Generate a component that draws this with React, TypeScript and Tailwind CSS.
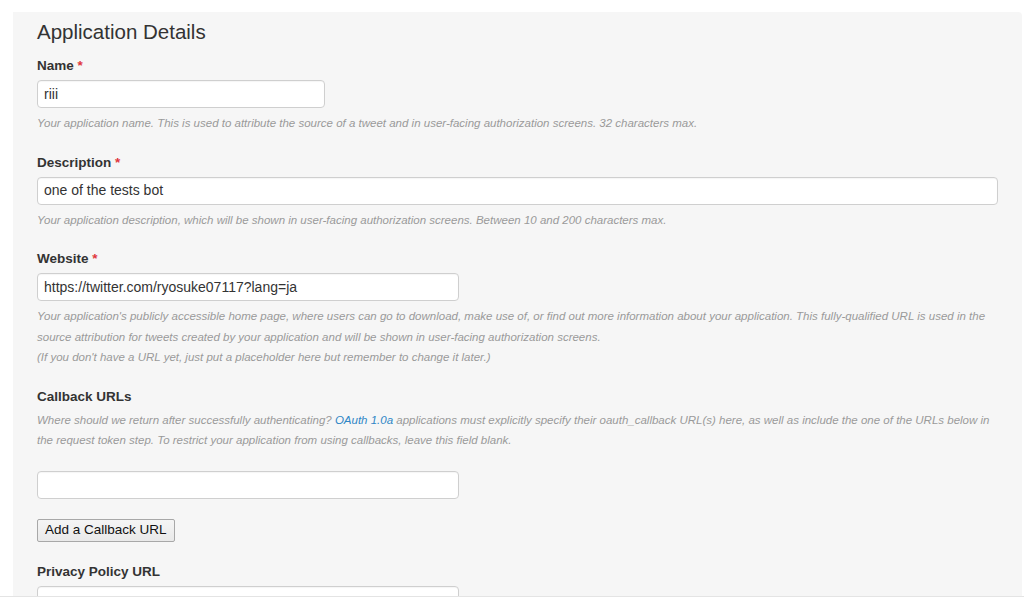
import React from "react";

const font = { fontFamily: '"Liberation Sans", Arial, Helvetica, sans-serif' };

function Label({ children, required }: { children: React.ReactNode; required?: boolean }) {
  return (
    <div className="text-[13.5px] leading-[20px] font-bold text-[#333] mb-[4px]">
      {children}
      {required && <span className="text-[#e0383e] font-bold"> *</span>}
    </div>
  );
}

function Field({ value, width }: { value?: string; width: string }) {
  return (
    <div
      className={`${width} h-[28px] bg-white border border-[#cfcfcf] rounded-[4px] px-[6px] flex items-center text-[14px] text-[#333] shadow-[inset_0_1px_1px_rgba(0,0,0,0.04)]`}
    >
      {value}
    </div>
  );
}

function Help({ children }: { children: React.ReactNode }) {
  return <div className="mt-[5px] text-[11.5px] leading-[20.5px] italic text-[#9a9a9a]">{children}</div>;
}

export default function App() {
  return (
    <div className="w-full h-[599px] bg-white flex flex-col overflow-hidden" style={font}>
      <div className="h-[596px] overflow-hidden pt-[12px] pl-[13px] pr-[2px]">
        <div className="h-full bg-[#f6f6f6] rounded-tr-[4px] pt-[8px] px-[24px]">
          <h2 className="text-[20.5px] leading-[24px] text-[#333] font-normal mb-[12px]">Application Details</h2>

          {/* Name */}
          <Label required>Name</Label>
          <Field value="riii" width="w-[288px]" />
          <Help>
            Your application name. This is used to attribute the source of a tweet and in user-facing authorization
            screens. 32 characters max.
          </Help>

          {/* Description */}
          <div className="mt-[19px]">
            <Label required>Description</Label>
            <Field value="one of the tests bot" width="w-full" />
            <Help>
              Your application description, which will be shown in user-facing authorization screens. Between 10 and 200
              characters max.
            </Help>
          </div>

          {/* Website */}
          <div className="mt-[19px]">
            <Label required>Website</Label>
            <Field value="https://twitter.com/ryosuke07117?lang=ja" width="w-[422px]" />
            <Help>
              Your application's publicly accessible home page, where users can go to download, make use of, or find out
              more information about your application. This fully-qualified URL is used in the source attribution for
              tweets created by your application and will be shown in user-facing authorization screens.
              <br />
              (If you don't have a URL yet, just put a placeholder here but remember to change it later.)
            </Help>
          </div>

          {/* Callback URLs */}
          <div className="mt-[19px]">
            <div className="text-[13.5px] leading-[20px] font-bold text-[#333]">Callback URLs</div>
            <div className="mt-[3px] text-[11.5px] leading-[20.5px] italic text-[#9a9a9a]">
              Where should we return after successfully authenticating?{" "}
              <span className="text-[#2f86c6]">OAuth 1.0a</span> applications must explicitly specify their
              oauth_callback URL(s) here, as well as include the one of the URLs below in the request token step. To
              restrict your application from using callbacks, leave this field blank.
            </div>
            <div className="mt-[20px]">
              <Field width="w-[422px]" />
            </div>
            <button className="mt-[20px] h-[23px] px-[7px] bg-gradient-to-b from-[#f5f5f5] to-[#e9e9e9] border border-[#a8a8a8] rounded-[2px] text-[13.5px] text-[#111] leading-none">
              Add a Callback URL
            </button>
          </div>

          {/* Privacy Policy URL */}
          <div className="mt-[20px]">
            <Label>Privacy Policy URL</Label>
            <Field width="w-[422px]" />
          </div>
        </div>
      </div>
      <div className="h-px bg-[#e4e4e4]" />
    </div>
  );
}
